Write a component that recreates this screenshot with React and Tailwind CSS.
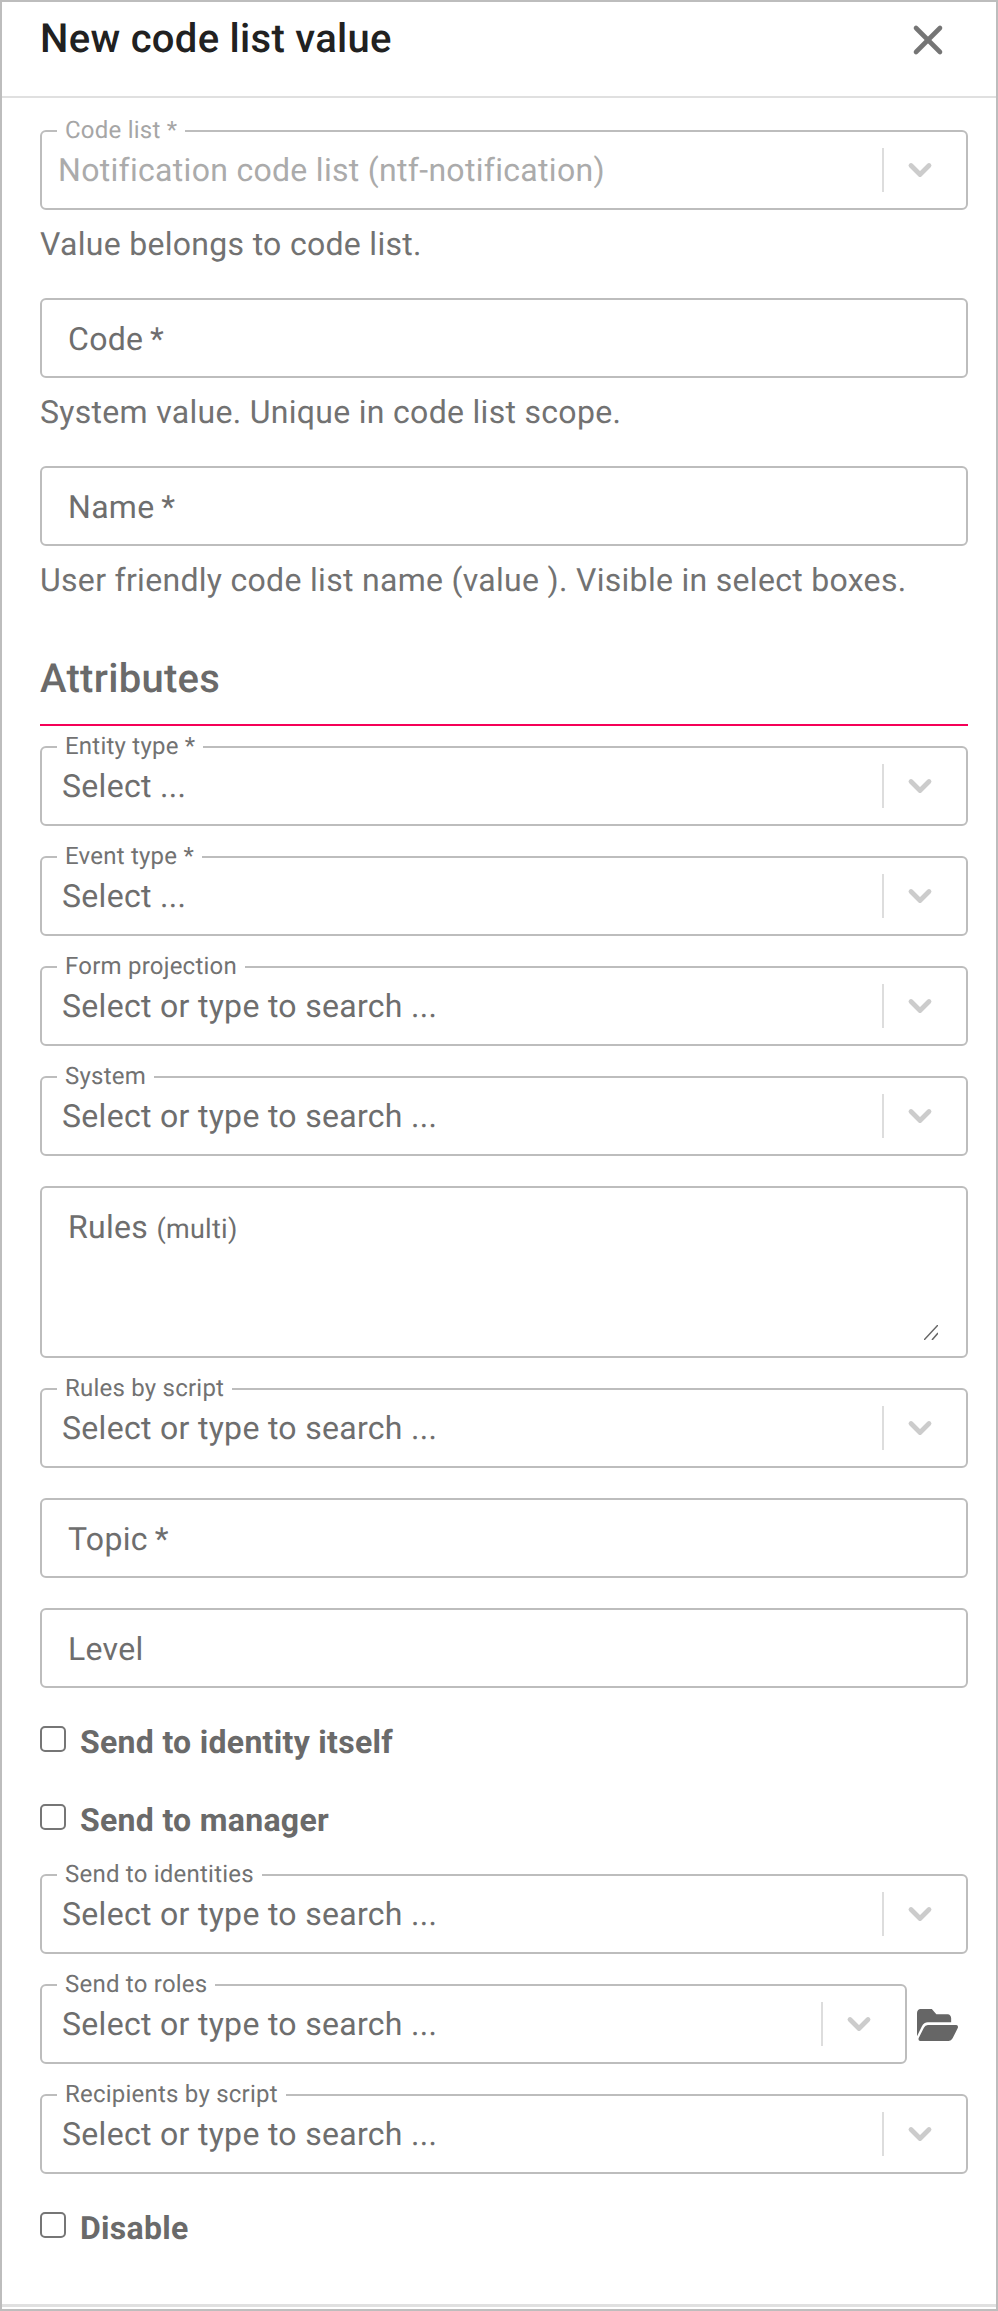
import { X, ChevronDown } from 'lucide-react';

function Select({ label, value, disabled, className = '' }) {
    return (
        <div className={`relative h-20 flex-1 rounded-md border-2 border-[#bdbdbd] bg-white flex items-center ${className}`}>
            <span className={`absolute left-[15px] -top-[16px] bg-white px-[8px] text-[24px] leading-[28px] tracking-[0.225px] ${disabled ? 'text-[#a6a6a6]' : 'text-[#727272]'}`}>
                {label}
            </span>
            <span className={`flex-1 text-[32px] leading-10 ${disabled ? 'pl-[16px] text-[#ababab]' : 'pl-[20px] text-[#6e6e6e]'}`}>
                {value}
            </span>
            <div className="w-[2px] h-11 bg-[#dddddd]"></div>
            <div className="w-[72px] mr-[10px] flex items-center justify-center">
                <ChevronDown className="w-9 h-9 text-[#cccccc]" strokeWidth={3.2} />
            </div>
        </div>
    );
}

function TextField({ label, className = '' }) {
    return (
        <div className={`h-20 rounded-md border-2 border-[#bdbdbd] bg-white flex items-center pl-[26px] pt-[2px] text-[32px] text-[#6e6e6e] ${className}`}>
            {label}
        </div>
    );
}

function Help({ children }) {
    return <p className="mt-[14px] text-[32px] leading-10 text-[#727272]">{children}</p>;
}

function Check({ label, className = '' }) {
    return (
        <div className={`flex items-center h-9 ${className}`}>
            <div className="w-[26px] h-[26px] rounded-[5px] border-2 border-[#767676] bg-white -mt-[2px]"></div>
            <span className="ml-[14px] mt-[4px] text-[32px] leading-10 font-bold text-[#6a6a6a]">{label}</span>
        </div>
    );
}

export default function App() {
    return (
        <div className="w-[998px] h-[2311px] border-2 border-[#bdbdbd] bg-white font-['Roboto',sans-serif] [text-rendering:geometricPrecision] antialiased overflow-hidden flex flex-col">
            <header className="h-[96px] shrink-0 border-b-2 border-[#e0e0e0] pl-[38px] pr-[44px] flex justify-between items-start">
                <h1 className="mt-[13px] text-[40px] leading-[48px] font-medium tracking-[0.3px] text-[#212121]">New code list value</h1>
                <X className="mt-[14px] w-12 h-12 text-[#757575]" strokeWidth={2.3} />
            </header>
            <main className="flex-1 pl-[38px] pr-[28px] flex flex-col tracking-[0.3px]">
                <Select className="mt-8 flex-none" label="Code list *" value="Notification code list (ntf-notification)" disabled />
                <Help>Value belongs to code list.</Help>
                <TextField className="mt-[34px]" label="Code&#8201;*" />
                <Help>System value. Unique in code list scope.</Help>
                <TextField className="mt-[34px]" label="Name&#8201;*" />
                <Help>User friendly code list name (value ). Visible in select boxes.</Help>
                <h2 className="mt-[53px] text-[40px] leading-[52px] font-medium text-[#6a6a6a] border-b-2 border-[#f50057] pb-[19px]">Attributes</h2>
                <Select className="mt-5 flex-none" label="Entity type *" value="Select ..." />
                <Select className="mt-[30px] flex-none" label="Event type *" value="Select ..." />
                <Select className="mt-[30px] flex-none" label="Form projection" value="Select or type to search ..." />
                <Select className="mt-[30px] flex-none" label="System" value="Select or type to search ..." />
                <div className="relative mt-[30px] h-[172px] rounded-md border-2 border-[#bdbdbd] pl-[26px] pt-[19px] text-[32px] leading-10 text-[#6e6e6e]">
                    Rules <span className="text-[27px]">(multi)</span>
                    <svg className="absolute right-[28px] bottom-[16px] w-[14px] h-[15px]" viewBox="0 0 14 15" stroke="#666666" strokeWidth="1.5" fill="none">
                        <path d="M0 15 L14 0 M8 15 L14 8" />
                    </svg>
                </div>
                <Select className="mt-[30px] flex-none" label="Rules by script" value="Select or type to search ..." />
                <TextField className="mt-[30px]" label="Topic&#8201;*" />
                <TextField className="mt-[30px]" label="Level" />
                <Check className="mt-[34px]" label="Send to identity itself" />
                <Check className="mt-[42px]" label="Send to manager" />
                <Select className="mt-[38px] flex-none" label="Send to identities" value="Select or type to search ..." />
                <div className="mt-[30px] flex items-center">
                    <Select label="Send to roles" value="Select or type to search ..." />
                    <svg className="mx-[10px] mt-[1px] w-[41px] h-8" viewBox="0 64 576 384" preserveAspectRatio="none" fill="#666666">
                        <path d="M572.694 292.093L500.27 416.248A63.997 63.997 0 0 1 444.989 448H45.025c-18.523 0-30.064-20.093-20.731-36.093l72.424-124.155A64 64 0 0 1 152 256h399.964c18.523 0 30.064 20.093 20.73 36.093zM152 224h328v-48c0-26.51-21.49-48-48-48H272l-64-64H48C21.49 64 0 85.49 0 112v278.046l69.077-118.418C86.214 242.25 117.989 224 152 224z" />
                    </svg>
                </div>
                <Select className="mt-[30px] flex-none" label="Recipients by script" value="Select or type to search ..." />
                <Check className="mt-[34px]" label="Disable" />
            </main>
            <div className="h-[3px] shrink-0 bg-[#e0e0e0] mb-[2px]"></div>
        </div>
    );
}
